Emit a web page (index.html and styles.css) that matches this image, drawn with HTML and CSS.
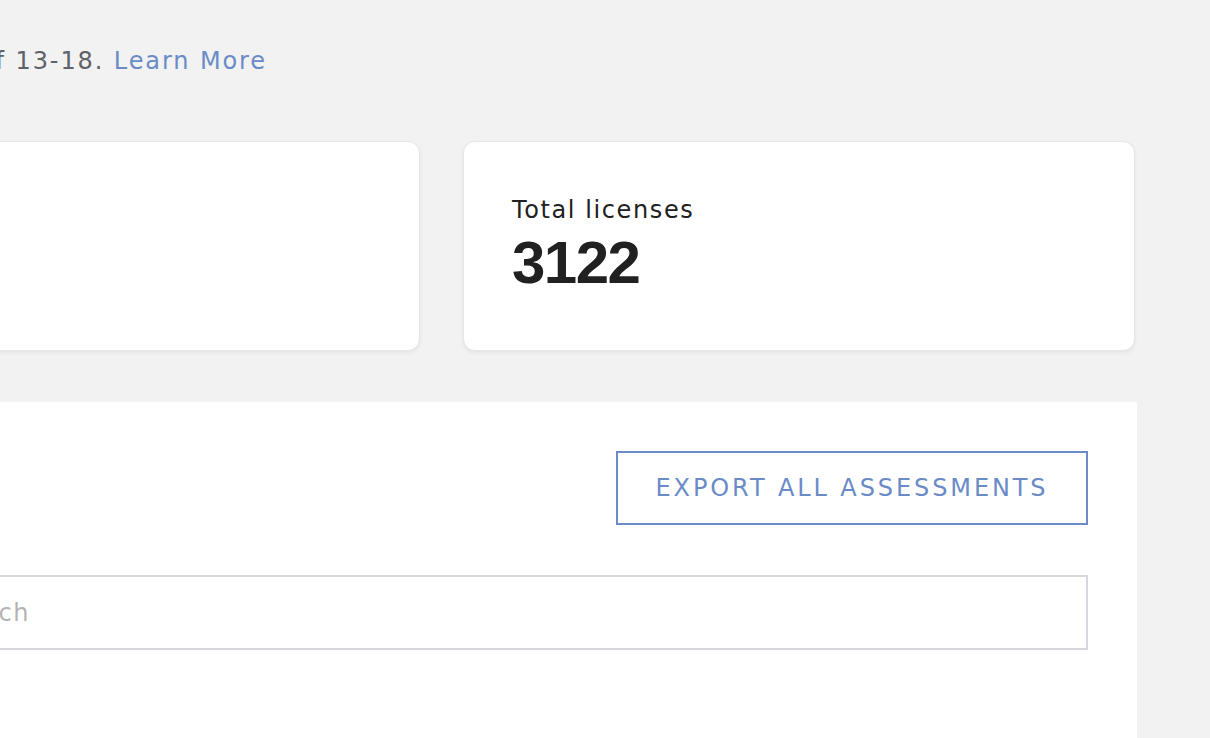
FILE: index.html
```html
<!DOCTYPE html>
<html lang="en">
<head>
    <meta charset="UTF-8">
    <meta name="viewport" content="width=device-width, initial-scale=1.0">
    <title>Assessments</title>
    <link rel="stylesheet" href="styles.css">
</head>
<body>
    <div class="page">
        <p class="intro">
            <span>Assessments are available for students between the ages of 13-18. <a href="#" class="link">Learn More</a></span>
        </p>

        <div class="stats">
            <div class="stat-card">
                <div class="stat-label">Active licenses</div>
                <div class="stat-value">2870</div>
            </div>
            <div class="stat-card">
                <div class="stat-label">Total licenses</div>
                <div class="stat-value">3122</div>
            </div>
        </div>

        <div class="panel">
            <div class="panel-head">
                <button class="export-btn">EXPORT ALL ASSESSMENTS</button>
            </div>
            <input type="text" class="search-input" placeholder="Search">
        </div>
    </div>
</body>
</html>
```

FILE: styles.css
```css
* {
    box-sizing: border-box;
    margin: 0;
    padding: 0;
}

html, body {
    height: 100%;
    overflow: hidden;
}

body {
    font-family: 'DejaVu Sans', 'Liberation Sans', Arial, sans-serif;
    background-color: #f2f2f2;
    color: #212121;
}

/* content column is wider than the window, scrolled to its right side */
.page {
    width: 1388px;
    margin-left: -252px;
    padding-top: 46px;
}

.intro {
    display: flex;
    justify-content: flex-end;
    width: 519px;
    font-size: 24px;
    line-height: 30px;
    color: #5f6269;
    white-space: nowrap;
    letter-spacing: 1.9px;
}

.link {
    color: #6b8bc7;
    text-decoration: none;
}

.stats {
    display: grid;
    grid-template-columns: 672px 672px;
    gap: 43px;
    margin-top: 65px;
}

.stat-card {
    height: 210px;
    background-color: white;
    border: 1px solid #e6e6ea;
    border-radius: 12px;
    box-shadow: 0 2px 4px rgba(0, 0, 0, 0.06);
    padding: 53px 48px 0;
}

.stat-label {
    font-size: 24px;
    line-height: 30px;
    letter-spacing: 1.6px;
}

.stat-value {
    margin-top: 3px;
    font-family: 'Liberation Sans', Arial, sans-serif;
    font-size: 60px;
    font-weight: bold;
    line-height: 70px;
    letter-spacing: -1.5px;
}

.panel {
    margin-top: 51px;
    width: 1389px;
    min-height: 400px;
    background-color: white;
    padding: 49px 49px;
}

.panel-head {
    display: flex;
    justify-content: flex-end;
    margin-bottom: 50px;
}

.export-btn {
    font-family: inherit;
    font-size: 24px;
    color: #6b8bc7;
    background-color: white;
    border: 2px solid #6b8bc7;
    height: 74px;
    width: 472px;
    letter-spacing: 2.9px;
    cursor: pointer;
}

.search-input {
    display: block;
    width: 100%;
    height: 75px;
    border: 2px solid #d6d8dc;
    font-family: inherit;
    font-size: 24px;
    letter-spacing: 1.6px;
    padding: 0 20px 0 139px;
    color: #212121;
}

.search-input::placeholder {
    color: #b4b4b4;
}
```
